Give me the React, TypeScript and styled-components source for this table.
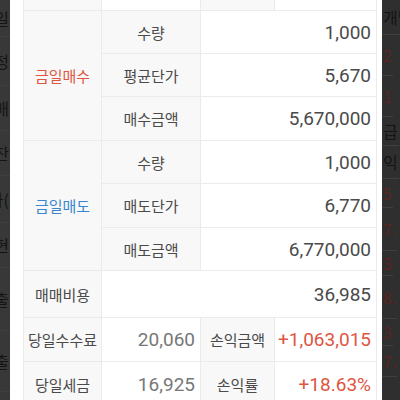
import React from 'react';
import styled, { createGlobalStyle } from 'styled-components';

type Tone = 'head' | 'sub' | 'value';
type Ink = 'dark' | 'muted' | 'red' | 'blue';

const inkColor: Record<Ink, string> = {
  dark: '#4a4a4a',
  muted: '#777',
  red: '#df553f',
  blue: '#3a87cf',
};

const GlobalStyle = createGlobalStyle`
  html, body {
    margin: 0;
    padding: 0;
    background: #333;
  }
  body {
    font-family: Roboto, "Noto Sans CJK KR", sans-serif;
  }
`;

const Screen = styled.div`
  display: flex;
  width: 400px;
  height: 400px;
  overflow: hidden;
  background: #343434;
`;

// dimmed page behind the sheet: only slivers of its text show at both edges
const Strip = styled.div<{ side: 'left' | 'right' }>`
  width: ${(p) => (p.side === 'left' ? '10px' : '18px')};
  flex-shrink: 0;
  overflow: hidden;
  display: flex;
  flex-direction: column;
  align-items: ${(p) => (p.side === 'left' ? 'flex-end' : 'flex-start')};
  background: ${(p) => (p.side === 'left' ? '#383838' : '#2f2f2f')};
  font-family: "Noto Sans CJK KR", sans-serif;
  font-size: 16px;
`;

const StripLine = styled.div<{ h: number; ink: 'black' | 'wine' }>`
  height: ${(p) => p.h}px;
  line-height: ${(p) => p.h}px;
  white-space: nowrap;
  color: ${(p) => (p.ink === 'black' ? '#141414' : '#5c2420')};
  border-bottom: 1px solid #3f3f3f;
  padding: 0 1px;
`;

const Sheet = styled.div`
  width: 372px;
  flex-shrink: 0;
  box-sizing: border-box;
  padding: 0 5px 0 13px;
  background: #fff;
  overflow: hidden;
`;

const Table = styled.div`
  display: grid;
  grid-template-columns: 77px 98px 73px 101px;
  grid-template-rows: 43px 42px 42px 43px 42px 43px 42px 46px 43px 44px;
  gap: 1px;
  margin-top: -34px;
  background: #ebebeb;
  border: 1px solid #ebebeb;
`;

const Cell = styled.div<{ tone: Tone; ink?: Ink; rows?: number; cols?: number }>`
  display: flex;
  align-items: center;
  justify-content: ${(p) => (p.tone === 'value' ? 'flex-end' : 'center')};
  padding: ${(p) => (p.tone === 'value' ? '0 5px 0 0' : '0')};
  background: ${(p) => (p.tone === 'value' ? '#fff' : '#f8f8f8')};
  color: ${(p) => inkColor[p.ink ?? 'dark']};
  font-size: ${(p) => (p.tone === 'value' ? '19px' : '15px')};
  white-space: nowrap;
  grid-row: ${(p) => (p.rows ? `span ${p.rows}` : 'auto')};
  grid-column: ${(p) => (p.cols ? `span ${p.cols}` : 'auto')};
`;

const leftLines: { h: number; t: string }[] = [
  { h: 36, t: '체결일' },
  { h: 48, t: '조정' },
  { h: 44, t: '금일매' },
  { h: 44, t: '잔' },
  { h: 46, t: '평가(' },
  { h: 44, t: '실현' },
  { h: 62, t: '인출' },
  { h: 60, t: '입출' },
];

const rightLines: { h: number; t: string; ink: 'black' | 'wine' }[] = [
  { h: 34, t: '개별', ink: 'black' },
  { h: 40, t: '2', ink: 'wine' },
  { h: 40, t: '1', ink: 'wine' },
  { h: 28, t: '급', ink: 'black' },
  { h: 32, t: '익', ink: 'black' },
  { h: 28, t: '5', ink: 'wine' },
  { h: 42, t: '7.', ink: 'wine' },
  { h: 24, t: '3', ink: 'wine' },
  { h: 42, t: '8.', ink: 'wine' },
  { h: 26, t: '3', ink: 'wine' },
  { h: 30, t: '7.', ink: 'wine' },
];

const sections = [
  {
    title: '금일매수',
    ink: 'red' as Ink,
    rows: [
      ['수량', '1,000'],
      ['평균단가', '5,670'],
      ['매수금액', '5,670,000'],
    ],
  },
  {
    title: '금일매도',
    ink: 'blue' as Ink,
    rows: [
      ['수량', '1,000'],
      ['매도단가', '6,770'],
      ['매도금액', '6,770,000'],
    ],
  },
];

export default function App() {
  return (
    <>
      <GlobalStyle />
      <Screen>
        <Strip side="left" aria-hidden>
          {leftLines.map((l, i) => (
            <StripLine key={i} h={l.h} ink="black">
              {l.t}
            </StripLine>
          ))}
        </Strip>
        <Sheet>
          <Table>
            <Cell tone="head">종목명</Cell>
            <Cell tone="value" ink="muted">
              005930
            </Cell>
            <Cell tone="head">체결일</Cell>
            <Cell tone="value" ink="muted">
              05.17
            </Cell>

            {sections.map((s) => (
              <React.Fragment key={s.title}>
                <Cell tone="head" ink={s.ink} rows={3}>
                  {s.title}
                </Cell>
                {s.rows.map(([label, value], i) => (
                  <React.Fragment key={i}>
                    <Cell tone="sub">{label}</Cell>
                    <Cell tone="value" cols={2}>
                      {value}
                    </Cell>
                  </React.Fragment>
                ))}
              </React.Fragment>
            ))}

            <Cell tone="head">매매비용</Cell>
            <Cell tone="value" cols={3}>
              36,985
            </Cell>

            <Cell tone="head">당일수수료</Cell>
            <Cell tone="value" ink="muted">
              20,060
            </Cell>
            <Cell tone="head">손익금액</Cell>
            <Cell tone="value" ink="red">
              +1,063,015
            </Cell>

            <Cell tone="head">당일세금</Cell>
            <Cell tone="value" ink="muted">
              16,925
            </Cell>
            <Cell tone="head">손익률</Cell>
            <Cell tone="value" ink="red">
              +18.63%
            </Cell>
          </Table>
        </Sheet>
        <Strip side="right" aria-hidden>
          {rightLines.map((l, i) => (
            <StripLine key={i} h={l.h} ink={l.ink}>
              {l.t}
            </StripLine>
          ))}
        </Strip>
      </Screen>
    </>
  );
}
